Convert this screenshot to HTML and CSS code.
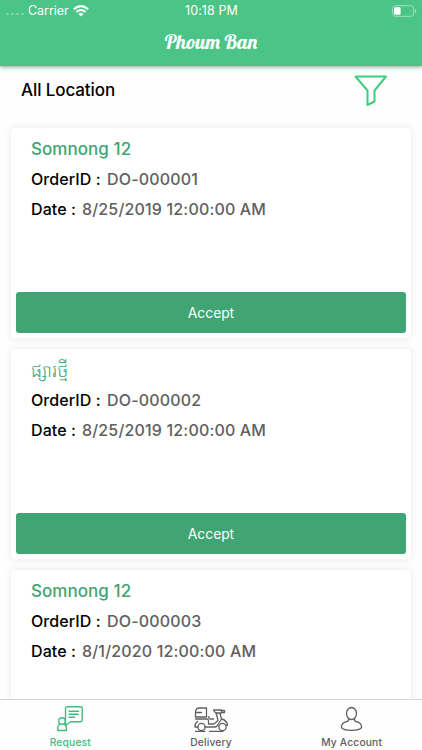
FILE: index.html
```html
<!DOCTYPE html>
<html lang="en">
<head>
<meta charset="utf-8">
<title>Phoum Ban</title>
<link rel="stylesheet" href="styles.css">
</head>
<body>
<div class="app">
  <header class="header">
    <div class="status">
      <div class="status-left">
        <span class="dots"><i></i><i></i><i></i><i></i></span>
        <span class="carrier">Carrier</span>
        <svg class="wifi" width="16" height="12" viewBox="0 0 16 12" fill="none" stroke="#fff" stroke-width="2.1"><path d="M.9 4.3Q8-2 15.1 4.3M3.4 7Q8 3 12.6 7"/><path d="M5.5 8.9Q8 6.8 10.5 8.9L8 11.5z" fill="#fff" stroke="none"/></svg>
      </div>
      <span class="clock">10:18 PM</span>
      <svg class="battery" width="26" height="12" viewBox="0 0 26 12"><rect x="1.7" y=".7" width="21" height="10.6" rx="2.6" fill="none" stroke="#a0dfbf"/><path d="M24 4v4q1.4-.6 1.4-2t-1.4-2" fill="#a0dfbf"/><rect x="3" y="2.2" width="6.6" height="7.6" rx="1.2" fill="#fff"/></svg>
    </div>
    <h1 class="title">Phoum Ban</h1>
  </header>
  <div class="filter-bar">
    <span class="location">All Location</span>
    <svg class="funnel" width="34" height="32" viewBox="0 0 34 32" fill="none" stroke="#42cc80" stroke-width="2" stroke-linejoin="round"><path d="M1.5 1.5H32L20.5 15.5V26.5L13.5 30V15.5z"/></svg>
  </div>
  <main class="list">
    <section class="card">
      <h2 class="name">Somnong 12</h2>
      <p class="row"><b class="order-label">OrderID :</b><span class="order">DO-000001</span></p>
      <p class="row"><b class="date-label">Date :</b><span class="date">8/25/2019 12:00:00 AM</span></p>
      <button class="accept">Accept</button>
    </section>
    <section class="card">
      <h2 class="name khmer" lang="km">ផ្សារថ្មី</h2>
      <p class="row"><b class="order-label">OrderID :</b><span class="order">DO-000002</span></p>
      <p class="row"><b class="date-label">Date :</b><span class="date">8/25/2019 12:00:00 AM</span></p>
      <button class="accept">Accept</button>
    </section>
    <section class="card">
      <h2 class="name">Somnong 12</h2>
      <p class="row"><b class="order-label">OrderID :</b><span class="order">DO-000003</span></p>
      <p class="row"><b class="date-label">Date :</b><span class="date">8/1/2020 12:00:00 AM</span></p>
    </section>
  </main>
  <nav class="tabs">
    <a class="tab active">
      <svg width="40" height="30" viewBox="0 0 40 30" fill="none" stroke="currentColor" stroke-width="1.4" stroke-linejoin="round" stroke-linecap="round"><path d="M15.5 3.5Q15.5 1.8 17.2 1.8H30.5Q32.2 1.8 32.2 3.5V15Q32.2 16.7 30.5 16.7H20.5L15.5 20.5z"/><path d="M19 6.2H28.5M19 9.2H28.5M19 12.2H24.5"/><circle cx="12" cy="16" r="3.3"/><path d="M10.2 18.9Q7.8 20 7.8 22.5V25.5H16.4V22.5Q16.4 20 13.8 18.9"/></svg>
      <span class="tab-label">Request</span>
    </a>
    <a class="tab">
      <svg width="40" height="30" viewBox="0 0 40 30" fill="none" stroke="currentColor" stroke-width="1.3" stroke-linejoin="round" stroke-linecap="round"><path d="M4.5 12V7Q4.5 3 8.5 3H15.5V12zM4.5 7.5H10.5M4.5 14H16Q17.5 14 17.5 16V19H23L27 15.5L25.2 8"/><path d="M17.8 11.3V12.5Q17.8 14 19.5 14H22.5M22.5 5H30.5V8H24.5zM30.5 5.5H33.5V7.5H30.5M28.8 8L30.5 14Q35.8 15 36.5 20.3H35.5M6.5 16.5Q3.8 18.5 4 22H7M14.1 22H23.5Q26 22 27 19.5L30.5 14"/><circle cx="10.5" cy="22" r="3.6"/><circle cx="31.5" cy="22" r="3.6"/><path d="M4.5 26.3H14M18.5 26.3H32"/></svg>
      <span class="tab-label">Delivery</span>
    </a>
    <a class="tab">
      <svg width="40" height="30" viewBox="0 0 40 30" fill="none" stroke="currentColor" stroke-width="1.3" stroke-linejoin="round"><ellipse cx="19.5" cy="8.5" rx="5" ry="6"/><path d="M16.5 13.3V15.5Q15.7 16.5 13.7 16.9Q9.7 18.1 9.5 21.5V22.7Q11.2 25.3 19.5 25.3T29.5 22.7V21.5Q29.1 18.1 25.3 16.9Q23.3 16.5 22.5 15.5V13.3"/></svg>
      <span class="tab-label">My Account</span>
    </a>
  </nav>
</div>
</body>
</html>
```
FILE: styles.css
```css
* { box-sizing: border-box; }
body { margin: 0; background: #fefefe; font-family: Inter, "Liberation Sans", sans-serif; }
.app { width: 422px; height: 750px; display: flex; flex-direction: column; overflow: hidden; }
.header { flex: 0 0 66px; background: #4ac487; color: #fff; box-shadow: 0 1px 4px rgba(0,0,0,.42); z-index: 1; }
.status { height: 20px; display: grid; grid-template-columns: 1fr 70px 1fr; align-items: center; padding: 1px 5px 0 6px; font-size: 12.5px; }
.status-left { display: flex; align-items: center; }
.dots { display: flex; gap: 2.2px; width: 22px; padding-top: 7px; }
.dots i { width: 2.8px; height: 2.8px; border-radius: 50%; background: #86d7ae; }
.carrier { width: 45px; letter-spacing: -.05px; }
.clock { text-align: center; white-space: nowrap; letter-spacing: .1px; }
.battery { justify-self: end; }
.title { margin: 8px 0 0; text-align: center; font: normal 400 20.3px/28px Lobster, "Liberation Serif", serif; }
.filter-bar { flex: 0 0 62px; display: flex; align-items: flex-start; justify-content: space-between; padding: 9px 34px 0 21px; }
.location { font-size: 17px; font-weight: 500; line-height: 31px; letter-spacing: -.1px; color: #000; }
.list { flex: 1; min-height: 0; overflow: hidden; display: flex; flex-direction: column; gap: 11px; padding: 8px 11px 0; margin-top: -8px; }
.card { flex: 0 0 210px; display: flex; flex-direction: column; background: #fff; border-radius: 4px; box-shadow: 0 0 8px rgba(0,0,0,.09); padding: 6px 5px 5px; }
.name { margin: 0 0 0 15px; height: 30px; font-size: 17px; line-height: 30px; font-weight: 500; letter-spacing: .05px; color: #40a573; }
.khmer { font-family: "Khmer OS", "Noto Sans Khmer", "DejaVu Sans", sans-serif; font-weight: 300; font-size: 18px; }
.row { display: flex; margin: 0 0 0 15px; height: 30px; line-height: 30px; font-size: 16px; white-space: nowrap; color: #606060; }
.row b { font-weight: 500; color: #000; }
.row span { font-weight: 500; letter-spacing: .17px; }
.order-label { width: 76px; letter-spacing: .1px; }
.date-label { width: 51px; letter-spacing: .1px; }
.accept { margin: auto 0 0; height: 41px; padding: 0; border: 0; border-radius: 3px; background: #40a573; color: #fff; font: 400 13.8px Inter, sans-serif; }
.tabs { flex: 0 0 51px; display: grid; grid-template-columns: repeat(3, 1fr); background: #fefefe; border-top: 1px solid #d5d5d5; z-index: 1; }
.tab { display: flex; flex-direction: column; align-items: center; color: #606060; padding-top: 5px; }
.tab svg { flex: 0 0 30px; }
.tab.active { color: #42bd7f; }
.tab-label { font-size: 10.3px; font-weight: 500; line-height: 14px; letter-spacing: .15px; }
```
